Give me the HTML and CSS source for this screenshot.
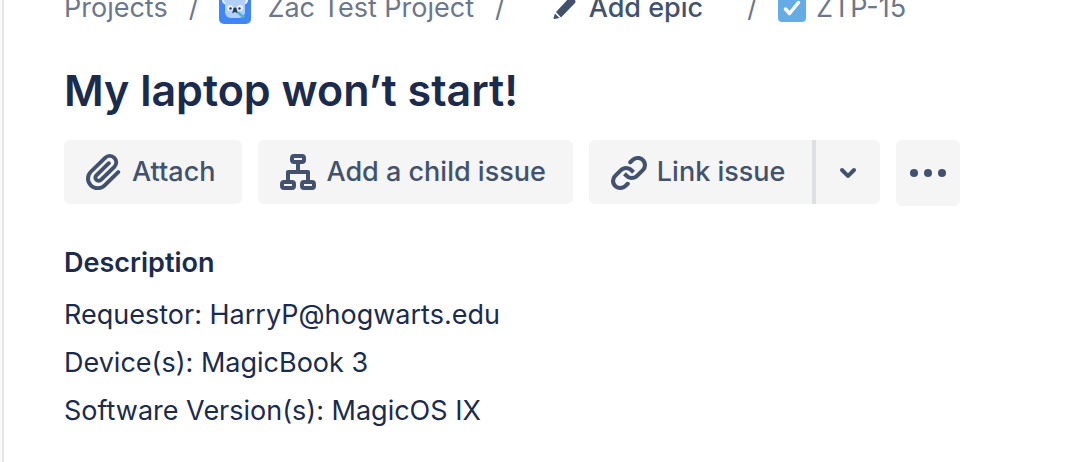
FILE: index.html
```html
<!DOCTYPE html>
<html lang="en">
<head>
    <meta charset="UTF-8">
    <meta name="viewport" content="width=device-width, initial-scale=1.0">
    <title>My laptop won’t start!</title>
    <link rel="stylesheet" href="styles.css">
</head>
<body>
    <main class="issue">
        <nav class="breadcrumbs" aria-label="Breadcrumbs">
            <a href="#">Projects</a>
            <span class="slash">/</span>
            <a href="#" class="project">
                <svg class="avatar" viewBox="0 0 32 32" aria-hidden="true">
                    <rect width="32" height="32" rx="5" fill="#3f86f8"/>
                    <circle cx="8" cy="8" r="4" fill="#b3d0fb" stroke="#e9f2fe" stroke-width="2"/>
                    <circle cx="24" cy="8" r="4" fill="#b3d0fb" stroke="#e9f2fe" stroke-width="2"/>
                    <rect x="6" y="7" width="20" height="19" rx="6" fill="#b3d0fb"/>
                    <circle cx="11" cy="16" r="3" fill="#e9f2fe"/>
                    <circle cx="21" cy="16" r="3" fill="#e9f2fe"/>
                    <circle cx="11.5" cy="16.500" r="1.2" fill="#253858"/>
                    <circle cx="20.5" cy="16.500" r="1.2" fill="#253858"/>
                    <path d="M14.200 18.500v-1a1.800 2 0 0 1 3.600 0v1l1.200 2.200h-1.800l-1.200-1-1.200 1H13z" fill="#253858"/>
                    <path d="M19 20.500l6 5" stroke="#4bb8c0" stroke-width="2.5"/>
                </svg>
                Zac Test Project
            </a>
            <span class="slash">/</span>
            <button type="button" class="epic">
                <svg class="pencil" viewBox="0 0 32 32" aria-hidden="true">
                    <path d="M7 20L21 5q1-1 2 0l3 3q1 2 0 3L12 25.5z"/>
                    <path d="M6 21.5L10.5 26l-5 1q-1 0-1-1z"/>
                </svg>
                Add epic
            </button>
            <span class="slash">/</span>
            <a href="#" class="key">
                <svg class="task" viewBox="0 0 28 28" aria-hidden="true">
                    <rect width="28" height="28" rx="4" fill="#65abe5"/>
                    <path d="M7.5 15l4 4.500 9-11" fill="none" stroke="#fff" stroke-width="3.5" stroke-linecap="round" stroke-linejoin="round"/>
                </svg>
                ZTP-15
            </a>
        </nav>

        <h1>My laptop won’t start!</h1>

        <div class="toolbar">
            <button type="button" class="btn">
                <svg class="icon" viewBox="3 3 18 18" aria-hidden="true">
                    <path d="M11.643 17.965c-1.530 1.495-4.016 1.496-5.542.004a3.773 3.773 0 0 1 .002-5.412l7.147-6.985a2.316 2.316 0 0 1 3.233-.003c.893.873.895 2.282.004 3.153l-6.703 6.550a.653.653 0 0 1-.914-.008.620.620 0 0 1 0-.902l6.229-6.087a.941.941 0 0 0 0-1.353.995.995 0 0 0-1.384 0l-6.230 6.087a2.502 2.502 0 0 0 0 3.607 2.643 2.643 0 0 0 3.683.009l6.703-6.550a4.074 4.074 0 0 0-.003-5.859 4.306 4.306 0 0 0-6.002.003l-7.148 6.985a5.655 5.655 0 0 0-.001 8.118c2.290 2.237 6.015 2.238 8.308-.004l6.782-6.627a.940.940 0 0 0 0-1.353.995.995 0 0 0-1.384 0l-6.782 6.627z"/>
                </svg>
                Attach
            </button>
            <button type="button" class="btn">
                <svg class="icon" viewBox="3 3 18 18" aria-hidden="true">
                    <g fill="none" stroke="currentColor" stroke-width="2">
                        <rect x="9" y="4" width="6" height="3" rx="1"/>
                        <rect x="4" y="17" width="6" height="3" rx="1"/>
                        <rect x="14" y="17" width="6" height="3" rx="1"/>
                        <path d="M12 8v4M7 16v-4h10v4" stroke-linejoin="round"/>
                    </g>
                </svg>
                Add a child issue
            </button>
            <div class="split">
                <button type="button" class="btn">
                    <svg class="icon" viewBox="3 3 18 18" aria-hidden="true">
                        <path d="M12.856 5.457l-.937.920a1.002 1.002 0 0 0 0 1.437 1.047 1.047 0 0 0 1.463 0l.984-.966c.967-.950 2.542-1.135 3.602-.288a2.540 2.540 0 0 1 .203 3.810l-2.903 2.852a2.646 2.646 0 0 1-3.696 0l-1.110-1.090L9 13.570l1.108 1.089c1.822 1.788 4.802 1.788 6.622 0l2.905-2.852a4.558 4.558 0 0 0-.357-6.820c-1.893-1.517-4.695-1.226-6.422.470"/>
                        <path d="M11.144 19.543l.937-.920a1.002 1.002 0 0 0 0-1.437 1.047 1.047 0 0 0-1.462 0l-.985.966c-.967.950-2.542 1.135-3.602.288a2.540 2.540 0 0 1-.203-3.810l2.903-2.852a2.646 2.646 0 0 1 3.696 0l1.110 1.090L15 11.430l-1.108-1.089c-1.822-1.788-4.802-1.788-6.622 0l-2.905 2.852a4.558 4.558 0 0 0 .357 6.820c1.893 1.517 4.695 1.226 6.422-.470"/>
                    </svg>
                    Link issue
                </button>
                <button type="button" class="btn btn-square" aria-label="More link options">
                    <svg class="icon" viewBox="3 3 18 18" aria-hidden="true">
                        <path d="M8.292 10.293a1.009 1.009 0 0 0 0 1.419l2.939 2.965c.218.215.5.322.779.322s.556-.107.769-.322l2.930-2.955a1.010 1.010 0 0 0 0-1.419.987.987 0 0 0-1.406 0l-2.298 2.317-2.307-2.327a.990.990 0 0 0-1.406 0z"/>
                    </svg>
                </button>
            </div>
            <button type="button" class="btn btn-square btn-more" aria-label="More actions">
                <svg class="icon" viewBox="0 0 36 36" aria-hidden="true">
                    <circle cx="4" cy="18" r="4"/>
                    <circle cx="18" cy="18" r="4"/>
                    <circle cx="32" cy="18" r="4"/>
                </svg>
            </button>
        </div>

        <section class="description">
            <h2>Description</h2>
            <p>Requestor: HarryP@hogwarts.edu</p>
            <p>Device(s): MagicBook 3</p>
            <p>Software Version(s): MagicOS IX</p>
        </section>
    </main>
</body>
</html>
```
FILE: styles.css
```css
* {
    box-sizing: border-box;
}
body {
    margin: 0;
    border-left: 2px solid #fafafa;
    background: #fff;
    color: #1b2b4d;
    font-family: Inter, "Liberation Sans", sans-serif;
    font-size: 27px;
    line-height: 48px;
}
.issue {
    min-height: 100vh;
    padding: 0 64px 24px 60px;
    border-left: 2px solid #e6e6e6;
    overflow: hidden;
}
/* the trail is scrolled partly out of view */
.breadcrumbs {
    display: flex;
    align-items: center;
    height: 40px;
    margin-top: -12px;
    line-height: 40px;
    color: #6b778c;
    white-space: nowrap;
}
.breadcrumbs a {
    color: inherit;
    text-decoration: none;
}
.breadcrumbs a:hover {
    text-decoration: underline;
}
.slash {
    margin: 0 21px;
}
.project,
.key,
.epic {
    display: flex;
    align-items: center;
}
.project {
    gap: 16px;
}
.key {
    gap: 10px;
}
.epic {
    gap: 8px;
    margin: 0 23px;
    padding: 0;
    border: none;
    background: none;
    color: #42526e;
    font: inherit;
    font-weight: 500;
    cursor: pointer;
}
.avatar,
.pencil {
    width: 32px;
    height: 32px;
}
.task {
    width: 28px;
    height: 28px;
}
.pencil,
.icon {
    fill: currentColor;
}
h1 {
    margin: 34px 0 22px;
    font-size: 43px;
    font-weight: 600;
    line-height: 56px;
}
.toolbar {
    display: flex;
    align-items: flex-start;
    gap: 16px;
}
.btn {
    display: flex;
    align-items: center;
    gap: 10px;
    height: 64px;
    padding: 0 27px 0 22px;
    border: none;
    border-radius: 6px;
    background: #f5f5f5;
    color: #42526e;
    font: inherit;
    font-weight: 500;
    white-space: nowrap;
    cursor: pointer;
}
.btn:hover {
    background: #ebecf0;
}
.btn-square {
    justify-content: center;
    width: 64px;
    padding: 0;
}
.btn-more {
    height: 66px;
}
.icon {
    width: 36px;
    height: 36px;
}
.split {
    display: flex;
}
.split .btn:first-child {
    border-right: 4px solid #dfe0e6;
    border-radius: 6px 0 0 6px;
}
.split .btn:last-child {
    border-radius: 0 6px 6px 0;
}
.description {
    margin-top: 33px;
}
h2 {
    margin: 0 0 4px;
    font-size: 27px;
    font-weight: 600;
    line-height: 48px;
}
p {
    margin: 0;
}
```
